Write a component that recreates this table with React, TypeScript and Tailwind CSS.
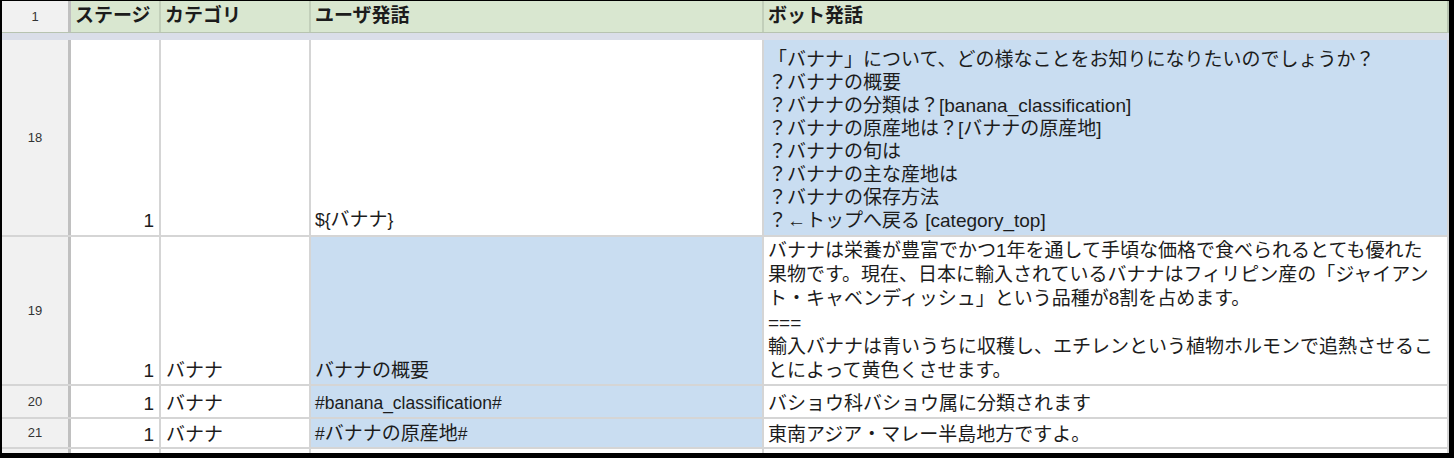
import React from 'react'

const font = "font-['Liberation_Sans','Noto_Sans_CJK_JP',sans-serif]"

const rows = [
    {
        num: '18',
        h: 'h-[197px]',
        lead: 'leading-[23px] pb-[3px]',
        stage: '1',
        cat: '',
        user: '${バナナ}',
        userBlue: false,
        botBlue: true,
        bot: [
            '「バナナ」について、どの様なことをお知りになりたいのでしょうか？',
            '？バナナの概要',
            '？バナナの分類は？[banana_classification]',
            '？バナナの原産地は？[バナナの原産地]',
            '？バナナの旬は',
            '？バナナの主な産地は',
            '？バナナの保存方法',
            '？←トップへ戻る [category_top]',
        ],
    },
    {
        num: '19',
        h: 'h-[149px]',
        lead: 'leading-[24px] pb-[1px]',
        stage: '1',
        cat: 'バナナ',
        user: 'バナナの概要',
        userBlue: true,
        botBlue: false,
        bot: [
            'バナナは栄養が豊富でかつ1年を通して手頃な価格で食べられるとても優れた',
            '果物です。現在、日本に輸入されているバナナはフィリピン産の「ジャイアン',
            'ト・キャベンディッシュ」という品種が8割を占めます。',
            '===',
            '輸入バナナは青いうちに収穫し、エチレンという植物ホルモンで追熱させるこ',
            'とによって黄色くさせます。',
        ],
    },
    {
        num: '20',
        h: 'h-[33px]',
        lead: 'leading-[23px] pb-[2px]',
        stage: '1',
        cat: 'バナナ',
        user: '#banana_classification#',
        userBlue: true,
        botBlue: false,
        bot: ['バショウ科バショウ属に分類されます'],
    },
    {
        num: '21',
        h: 'h-[30px]',
        lead: 'leading-[23px] pb-[1px]',
        stage: '1',
        cat: 'バナナ',
        user: '#バナナの原産地#',
        userBlue: true,
        botBlue: false,
        bot: ['東南アジア・マレー半島地方ですよ。'],
    },
    {
        num: '',
        h: 'h-[20px]',
        lead: 'leading-[23px]',
        stage: '',
        cat: '',
        user: '',
        userBlue: false,
        botBlue: false,
        bot: [],
    },
]

// latin runs in the user column render a bit smaller than the CJK glyphs
function Txt({ s }: { s: string }) {
    return (
        <>
            {s.split(/([\x20-\x7e]+)/).map((part, i) =>
                /^[\x20-\x7e]+$/.test(part)
                    ? <span key={i} className="text-[17.5px]">{part}</span>
                    : <React.Fragment key={i}>{part}</React.Fragment>
            )}
        </>
    )
}

const cell = 'border-r-2 border-[#d5d5d5] flex flex-col justify-end shrink-0'

export default function App() {
    return (
        <div className={`w-[1454px] h-[458px] bg-black pt-px pl-[2px] pr-[5px] pb-[5px] overflow-hidden ${font} text-[19px] text-[#1c1c1c]`}>
            <div className="h-full bg-white overflow-hidden flex flex-col">
                {/* header */}
                <div className="flex h-[32px] shrink-0 border-b border-[#b7c3b0]">
                    <div className="w-[69px] shrink-0 bg-[#f1f1f1] border-r-[3px] border-[#c0c0c0] flex items-center justify-center text-[13px] text-[#333]">1</div>
                    <div className="w-[90px] shrink-0 bg-[#d9e7d0] border-r-2 border-[#c2cfba] flex items-center px-[4px] font-bold">ステージ</div>
                    <div className="w-[150px] shrink-0 bg-[#d9e7d0] border-r-2 border-[#c2cfba] flex items-center px-[4px] font-bold">カテゴリ</div>
                    <div className="w-[453px] shrink-0 bg-[#d9e7d0] border-r-2 border-[#c2cfba] flex items-center px-[4px] font-bold">ユーザ発話</div>
                    <div className="flex-1 bg-[#d9e7d0] border-r-2 border-[#b7c3b0] flex items-center px-[4px] font-bold">ボット発話</div>
                </div>
                <div className="h-[7px] shrink-0 bg-[#dadee8]" />

                {rows.map((r, i) => (
                    <div key={i} className={`flex ${r.h} shrink-0 border-b-2 border-[#d5d5d5]`}>
                        <div className="w-[69px] shrink-0 bg-[#f1f1f1] border-r-[3px] border-[#c0c0c0] flex items-center justify-center text-[13px] text-[#333]">
                            {r.num}
                        </div>
                        <div className={`${cell} ${r.lead} w-[90px] items-end px-[5px]`}>{r.stage}</div>
                        <div className={`${cell} ${r.lead} w-[150px] px-[5px]`}>{r.cat}</div>
                        <div className={`${cell} ${r.lead} w-[453px] px-[4px] ${r.userBlue ? 'bg-[#c9ddf1]' : ''}`}>
                            <div className="whitespace-nowrap"><Txt s={r.user} /></div>
                        </div>
                        <div className={`${cell} ${r.lead} flex-1 shrink px-[4px] ${r.botBlue ? 'bg-[#c9ddf1]' : ''}`}>
                            {r.bot.map((line, j) => (
                                <div key={j} className="whitespace-nowrap">{line}</div>
                            ))}
                        </div>
                    </div>
                ))}
            </div>
        </div>
    )
}
